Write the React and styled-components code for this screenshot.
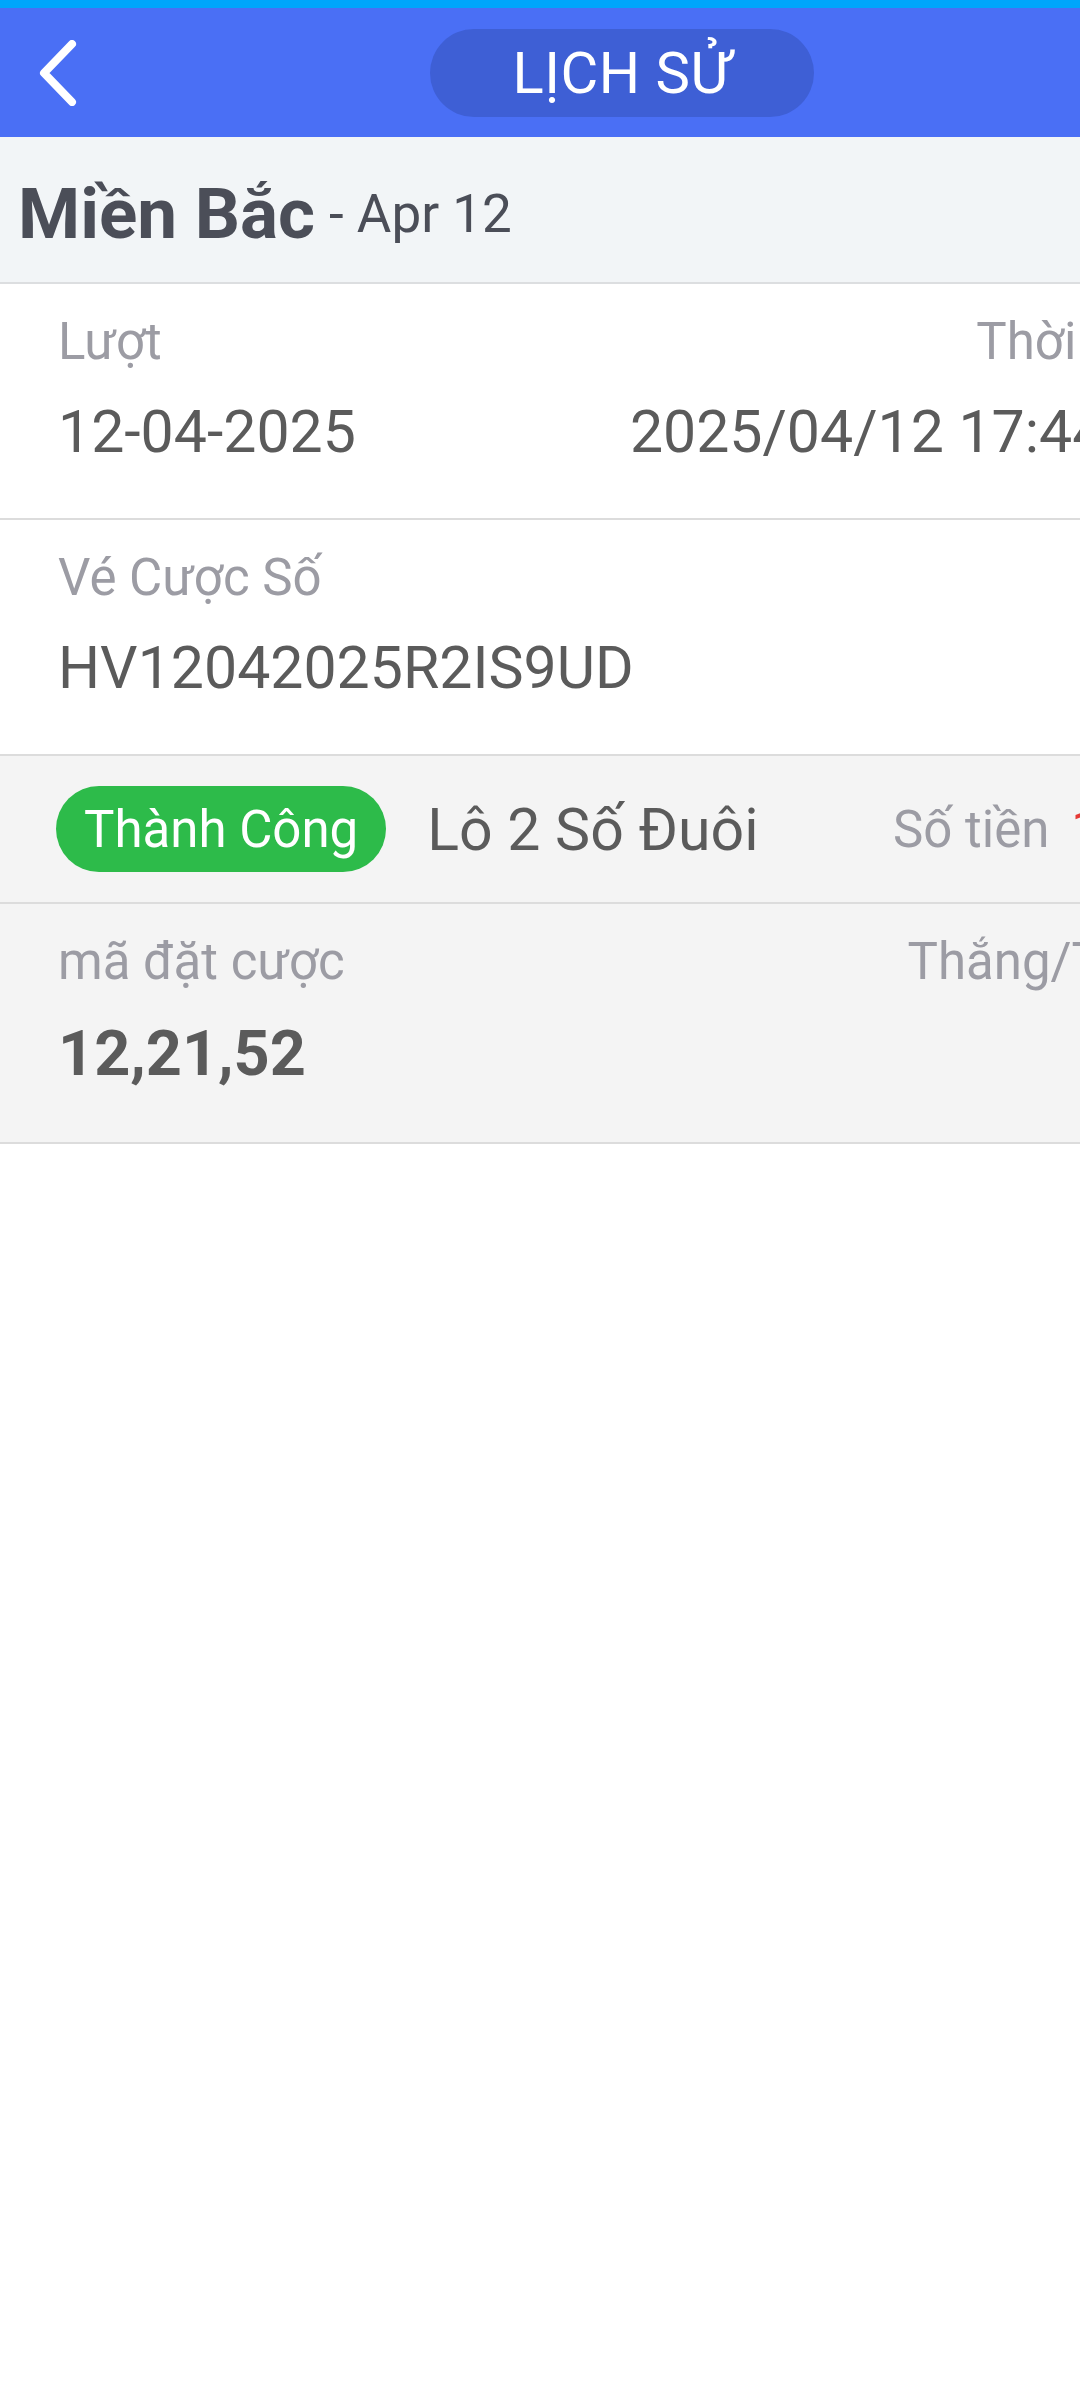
import React from 'react';
import styled, { createGlobalStyle } from 'styled-components';

const GlobalStyle = createGlobalStyle`
  html, body {
    margin: 0;
    padding: 0;
    background: #ffffff;
    overflow-x: hidden;
  }
  body {
    font-family: Roboto, "Noto Sans", "Liberation Sans", sans-serif;
  }
`;

const Page = styled.div`
  width: 1244px;
  min-height: 2400px;
  background: #ffffff;
`;

const StatusStrip = styled.div`
  height: 8px;
  background: #00a6fb;
`;

const TopBar = styled.header`
  height: 129px;
  background: #4a6ff5;
  display: flex;
  align-items: center;
  justify-content: center;
  position: relative;
`;

const BackButton = styled.button`
  position: absolute;
  left: 28px;
  top: 50%;
  transform: translateY(-50%);
  width: 60px;
  height: 80px;
  border: 0;
  padding: 0;
  background: transparent;
  display: flex;
  align-items: center;
  justify-content: center;
`;

const TitlePill = styled.div`
  width: 384px;
  height: 88px;
  border-radius: 44px;
  background: #3e5fd5;
  color: #ffffff;
  font-size: 58px;
  line-height: 88px;
  text-align: center;
  letter-spacing: 0.5px;
`;

const RegionBar = styled.div`
  height: 147px;
  box-sizing: border-box;
  background: #f2f5f7;
  border-bottom: 2px solid #dcdee0;
  display: flex;
  align-items: center;
  padding: 8px 18px 0;
`;

const RegionName = styled.span`
  font-size: 71px;
  font-weight: 700;
  color: #4b4e58;
`;

const RegionDate = styled.span`
  font-size: 53px;
  color: #4b4e58;
  margin-left: 14px;
`;

const Row = styled.div`
  display: flex;
  justify-content: space-between;
  align-items: ${(p) => (p.$center ? 'center' : 'flex-start')};
  padding: ${(p) => (p.$center ? '30px 58px 30px 56px' : '28px 58px 51px 58px')};
  background: ${(p) => (p.$shade ? '#f4f4f4' : '#ffffff')};
  border-bottom: 2px solid #dcdcdc;
`;

const Field = styled.div`
  display: flex;
  flex-direction: column;
  gap: 25px;
  align-items: ${(p) => (p.$right ? 'flex-end' : 'flex-start')};
`;

const Label = styled.div`
  font-size: 51px;
  line-height: 60px;
  color: #9c9ca4;
  white-space: nowrap;
`;

const Value = styled.div`
  font-size: ${(p) => (p.$bold ? '63px' : '59px')};
  font-weight: ${(p) => (p.$bold ? 700 : 400)};
  line-height: ${(p) => (p.$bold ? '74px' : '70px')};
  color: #5b5b5b;
  white-space: nowrap;
`;

const Group = styled.div`
  display: flex;
  align-items: center;
  gap: 41px;
`;

const StatusBadge = styled.span`
  height: 86px;
  padding: 0 28px;
  border-radius: 43px;
  background: #2dbb4a;
  color: #ffffff;
  font-size: 51px;
  display: flex;
  align-items: center;
  white-space: nowrap;
`;

const BetType = styled.span`
  font-size: 59px;
  color: #5b5b5b;
  white-space: nowrap;
`;

const Amount = styled.span`
  font-size: 51px;
  color: #9c9ca4;
  white-space: nowrap;

  b {
    font-weight: 400;
    color: #e53935;
    margin-left: 22px;
  }
`;

const ChevronLeft = () => (
  <svg width="40" height="66" viewBox="0 0 40 66" fill="none">
    <path
      d="M34 4 L6 33 L34 62"
      stroke="#ffffff"
      strokeWidth="8"
      strokeLinecap="round"
      strokeLinejoin="round"
    />
  </svg>
);

export default function App() {
  return (
    <Page>
      <GlobalStyle />
      <StatusStrip />
      <TopBar>
        <BackButton aria-label="back">
          <ChevronLeft />
        </BackButton>
        <TitlePill>LỊCH SỬ</TitlePill>
      </TopBar>

      <RegionBar>
        <RegionName>Miền Bắc</RegionName>
        <RegionDate>- Apr 12</RegionDate>
      </RegionBar>

      <Row>
        <Field>
          <Label>Lượt</Label>
          <Value>12-04-2025</Value>
        </Field>
        <Field $right>
          <Label>Thời gian</Label>
          <Value>2025/04/12 17:44:08</Value>
        </Field>
      </Row>

      <Row>
        <Field>
          <Label>Vé Cược Số</Label>
          <Value>HV12042025R2IS9UD</Value>
        </Field>
      </Row>

      <Row $shade $center>
        <Group>
          <StatusBadge>Thành Công</StatusBadge>
          <BetType>Lô 2 Số Đuôi</BetType>
        </Group>
        <Amount>
          Số tiền<b>1000</b>
        </Amount>
      </Row>

      <Row $shade>
        <Field>
          <Label>mã đặt cược</Label>
          <Value $bold>12,21,52</Value>
        </Field>
        <Field $right>
          <Label>Thắng/Thua</Label>
          <Value>0</Value>
        </Field>
      </Row>
    </Page>
  );
}
